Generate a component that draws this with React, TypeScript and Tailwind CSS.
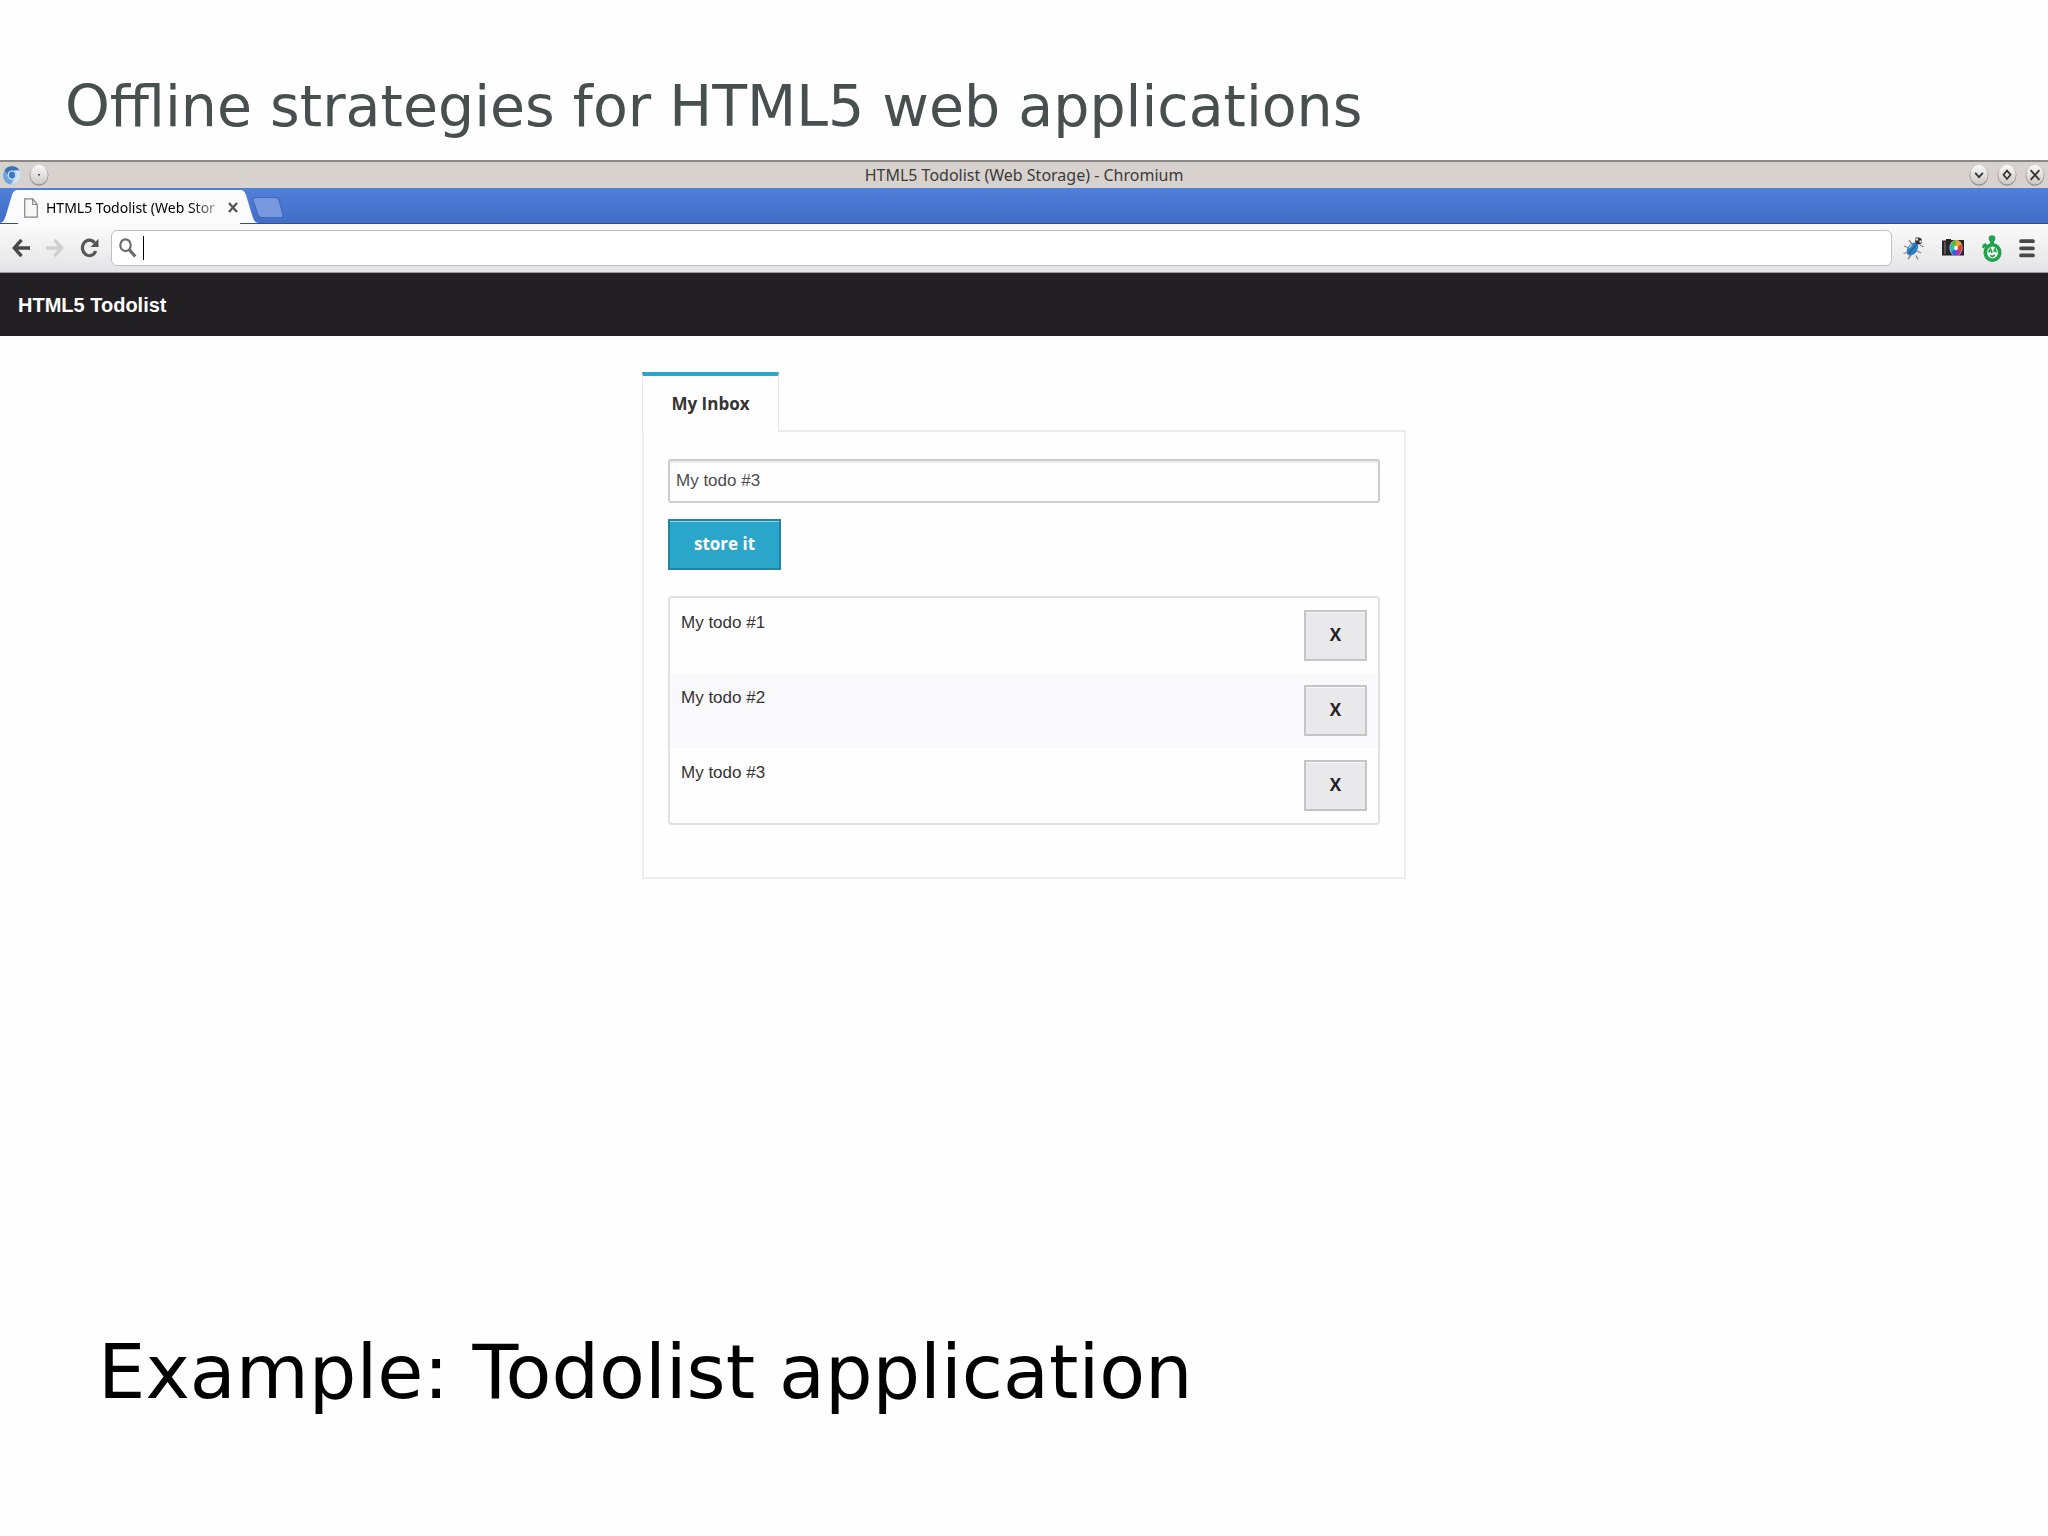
import { useState } from "react";

interface Todo {
  id: number;
  text: string;
}

const initialTodos: Todo[] = [
  { id: 1, text: "My todo #1" },
  { id: 2, text: "My todo #2" },
  { id: 3, text: "My todo #3" },
];

const ChromiumLogo = () => (
  <svg width="18" height="20" viewBox="0 0 18 20" aria-hidden="true">
    <ellipse cx="9" cy="10" rx="8.5" ry="9.5" fill="#a3c8ea" />
    <path d="M1.5 5.5C4 0.5 13 -0.5 16.5 5.5H9c-3 0-4.500 2-4.500 4.500z" fill="#3f70b0" />
    <path d="M1.500 5.500l4 7.500c1 2 3 2 4.500 1.500L7.500 19.500C0 18-1.500 10 1.500 5.500z" fill="#6ea6dc" />
    <path d="M16.500 5.500H12c2 3 1.500 6 0 8l-3 6c7-.5 10-7.500 7.500-14z" fill="#d3e4f3" />
    <ellipse cx="9" cy="10" rx="4" ry="4.500" fill="#c9def2" />
    <ellipse cx="9" cy="10" rx="3" ry="3.500" fill="#3a78c0" />
  </svg>
);

interface WindowButtonProps {
  label: string;
  d: string;
}

const WindowButton = ({ label, d }: WindowButtonProps) => (
  <button aria-label={label} className="h-[22px] w-5">
    <svg width="20" height="22" viewBox="0 0 18 20">
      <defs>
        <linearGradient id="knob" x1="0" y1="0" x2="0" y2="1">
          <stop offset="0" stopColor="#fafafa" />
          <stop offset="1" stopColor="#cbc7c5" />
        </linearGradient>
      </defs>
      <ellipse cx="9" cy="10.500" rx="8.500" ry="9.300" fill="#8d8987" />
      <ellipse cx="9" cy="9.700" rx="8" ry="9" fill="url(#knob)" />
      <path d={d} fill="none" stroke="#37332f" strokeWidth="1.600" />
    </svg>
  </button>
);

const PageIcon = () => (
  <svg width="14" height="20" viewBox="0 0 14 20" aria-hidden="true">
    <path d="M.7.800h8L13.300 6.500v12.700H.7z" fill="#f7f7f7" stroke="#858585" strokeWidth="1.200" />
    <path d="M8.700.800v5.700h4.600" fill="none" stroke="#858585" strokeWidth="1.200" />
  </svg>
);

const BackIcon = () => (
  <svg width="18" height="20" viewBox="0 0 18 20">
    <path d="M18 10H3M9.500 1.800L2.300 10l7.200 8.200" fill="none" stroke="currentColor" strokeWidth="3.400" />
  </svg>
);

const ReloadIcon = () => (
  <svg width="19" height="20" viewBox="0 0 19 20">
    <path d="M14.500 4.700A6.900 7.800 0 1 0 15.700 13" fill="none" stroke="#565656" strokeWidth="3.200" />
    <path d="M18.500 .8V9h-8z" fill="#565656" />
  </svg>
);

const SearchIcon = () => (
  <svg width="18" height="20" viewBox="0 0 18 20" aria-hidden="true">
    <ellipse cx="6.500" cy="7.200" rx="5.200" ry="5.900" fill="none" stroke="#6a6a6a" strokeWidth="2.200" />
    <path d="M10 11.500l6.300 7" stroke="#6a6a6a" strokeWidth="3.200" />
  </svg>
);

const BugIcon = () => (
  <svg width="21" height="24" viewBox="0 0 21 24">
    <path d="M1 10l5 2M.5 17.500l5-1.500M5 23l3-4M13 19.500l2 4M14 15l4 2M6 4l3 4M13 1l1 4M17 9l3.500 2" stroke="#8d857c" strokeWidth="1.300" fill="none" />
    <ellipse cx="9.500" cy="13" rx="4.800" ry="7.200" transform="rotate(35 9.500 13)" fill="#2f7fc4" />
    <path d="M5.500 18L13 8.500" stroke="#174f87" strokeWidth="1" />
    <path d="M6 12l3-3.500" stroke="#9bd0f3" strokeWidth="1.500" />
    <ellipse cx="15.500" cy="5" rx="3.400" ry="3.600" fill="#30302e" />
    <circle cx="14" cy="3.500" r="1.200" fill="#ddd" />
    <circle cx="17.500" cy="5.500" r="1.200" fill="#ddd" />
  </svg>
);

const CameraIcon = () => (
  <svg width="24" height="20" viewBox="0 0 24 20">
    <path d="M1 2.500h4V1h5v1h13v15.500H1z" fill="#26262a" />
    <path d="M4 4v12" stroke="#55555a" strokeWidth="2" />
    <ellipse cx="15" cy="10" rx="6.600" ry="8" fill="#b9bbc0" />
    <path d="M15 10V2.500a6 7.500 0 0 1 5.200 3.700z" fill="#f4a020" />
    <path d="M15 10l5.200-3.800a6 7.500 0 0 1 0 7.600z" fill="#e23a2c" />
    <path d="M15 10l5.200 3.800A6 7.500 0 0 1 15 17.500z" fill="#b02bbd" />
    <path d="M15 10v7.500a6 7.500 0 0 1-5.200-3.700z" fill="#2d62dc" />
    <path d="M15 10l-5.200 3.800a6 7.500 0 0 1 0-7.600z" fill="#27b6c4" />
    <path d="M15 10L9.800 6.200A6 7.500 0 0 1 15 2.500z" fill="#57bd37" />
    <ellipse cx="15" cy="10" rx="1.800" ry="2.200" fill="#fff" />
  </svg>
);

const GreenBotIcon = () => (
  <svg width="20" height="27" viewBox="0 0 20 27">
    <circle cx="10" cy="3.500" r="3.300" fill="#1fa44b" />
    <path d="M8 4h4v6H8z" fill="#1fa44b" />
    <path d="M1.500 9l4 4.500M.5 12.500l4-3.500" stroke="#1fa44b" strokeWidth="2.400" fill="none" />
    <ellipse cx="10.500" cy="17.500" rx="7.200" ry="7.700" fill="#fff" stroke="#1fa44b" strokeWidth="3.600" />
    <path d="M6.500 17.500l2-3.500 1.500 4M14.500 17.500l-1.500-3.500-1.500 3M8 20.500l2.500 1 2.500-1.500" fill="none" stroke="#1fa44b" strokeWidth="1.600" />
  </svg>
);

const MenuIcon = () => (
  <svg width="16" height="19" viewBox="0 0 16 19">
    <path d="M2 2.200h12M2 9.300h12M2 16.400h12" stroke="#484848" strokeWidth="3.700" strokeLinecap="round" />
  </svg>
);

const BrowserChrome = () => (
  <div>
    <div className="flex h-7 items-center border-t-2 border-[#8b8886] bg-[#d7d2ce] px-[3px]">
      <div className="flex flex-1 items-center gap-2">
        <ChromiumLogo />
        <WindowButton label="Sticky" d="M9 9v1.500" />
      </div>
      <p className="font-['Noto_Sans'] text-base leading-6 text-[#3b3b3b]">
        HTML5 Todolist (Web Storage) - Chromium
      </p>
      <div className="flex flex-1 items-center justify-end gap-2">
        <WindowButton label="Minimize" d="M5.500 8l3.500 4 3.500-4" />
        <WindowButton label="Maximize" d="M9 6l3.200 3.800L9 13.600 5.800 9.800z" />
        <WindowButton label="Close" d="M5 5.500l8 9M13 5.500l-8 9" />
      </div>
    </div>

    <div className="flex h-9 items-end border-b border-[#2c4f96] bg-linear-to-b from-[#527fd8] to-[#406ec8]">
      <svg width="18" height="33" viewBox="0 0 18 33" aria-hidden="true">
        <path d="M0 33c4-1 4.500-4 6-8L12 5c1.500-4 3-5 6-5v33z" fill="#fbfbfb" />
      </svg>
      <div className="-mb-px flex h-[34px] w-[222px] items-center gap-2 bg-[#fbfbfb] pl-[6px] pt-px">
        <PageIcon />
        <span className="w-[174px] whitespace-nowrap bg-linear-to-r from-black from-80% to-[#c8c8c8] bg-clip-text font-['Noto_Sans'] text-sm leading-6 text-transparent">
          HTML5 Todolist (Web Stor
        </span>
        <button aria-label="Close tab" className="w-[10px] shrink-0">
          <svg width="10" height="11" viewBox="0 0 10 11">
            <path d="M1 1l8 9M9 1l-8 9" stroke="#555" strokeWidth="2.300" />
          </svg>
        </button>
      </div>
      <svg width="18" height="33" viewBox="0 0 18 33" aria-hidden="true">
        <path d="M18 33c-4-1-4.500-4-6-8L6 5C4.500 1 3 0 0 0v33z" fill="#fbfbfb" />
      </svg>
      <button aria-label="New tab" className="-ml-[6px] mb-[5px]">
        <svg width="32" height="21" viewBox="0 0 30 20">
          <path d="M3 .5h19c2 0 3 1 3.500 2.500L29 16c.5 2 0 3.500-2 3.500H9c-2 0-3-1-3.500-2.500L.8 3C.5 1.500 1 .5 3 .5z" fill="#7798de" stroke="#4067b5" />
        </svg>
      </button>
    </div>

    <div className="flex h-[49px] items-center border-b border-[#9d9d9d] bg-linear-to-b from-[#fbfbfb] to-[#e4e4e6] pl-3 pr-[13px]">
      <div className="flex gap-4 pr-3">
        <button aria-label="Back" className="text-[#484848]">
          <BackIcon />
        </button>
        <button aria-label="Forward" className="rotate-180 text-[#cfcfcf]">
          <BackIcon />
        </button>
        <button aria-label="Reload">
          <ReloadIcon />
        </button>
      </div>
      <label className="flex h-9 flex-1 items-center gap-[6px] rounded-md border border-[#bfbfc3] bg-white pl-[7px]">
        <SearchIcon />
        <span className="h-6 w-px bg-black" />
        <input type="text" aria-label="Address" className="h-8 flex-1 outline-none" />
      </label>
      <div className="flex items-center gap-[17px] pl-[11px]">
        <button aria-label="Debugger">
          <BugIcon />
        </button>
        <button aria-label="Screen capture">
          <CameraIcon />
        </button>
        <button aria-label="Extension">
          <GreenBotIcon />
        </button>
        <button aria-label="Menu">
          <MenuIcon />
        </button>
      </div>
    </div>
  </div>
);

const TodoApp = () => {
  const [value, setValue] = useState<string>("My todo #3");
  const [todos, setTodos] = useState<Todo[]>(initialTodos);

  const addTodo = () => setTodos([...todos, { id: Date.now(), text: value }]);
  const removeTodo = (id: number) => setTodos(todos.filter((todo) => todo.id !== id));

  return (
    <div className="font-['Liberation_Sans',sans-serif] text-[17px]">
      <header className="flex h-[63px] items-center bg-[#232024] px-[18px]">
        <h2 className="text-xl font-bold text-white">HTML5 Todolist</h2>
      </header>

      <main className="mx-auto mt-9 w-[764px]">
        <div className="flex">
          <button className="h-[60px] w-[137px] border-x border-t-4 border-x-[#e8e8ea] border-t-[#2ba6cb] font-['Open_Sans'] font-bold text-[#333]">
            My Inbox
          </button>
          <div className="flex-1 border-b-2 border-[#ebebed]" />
        </div>
        <div className="border-x-2 border-b-2 border-[#ededef] px-6 pb-[52px] pt-[27px]">
          <input
            type="text"
            aria-label="New todo"
            value={value}
            onChange={(e) => setValue(e.target.value)}
            className="block h-11 w-full rounded-[3px] border-2 border-[#cccbce] px-[6px] text-[#4d4d4d] shadow-[inset_0_2px_2px_rgba(0,0,0,0.08)] outline-none"
          />
          <button
            onClick={addTodo}
            className="mt-4 block h-[51px] w-[113px] border-2 border-[#2284a1] bg-[#2ba6cb] pb-[2px] font-['Open_Sans'] font-bold text-white shadow-[inset_0_1px_0_rgba(255,255,255,0.5)]"
          >
            store it
          </button>
          <ul className="mt-[26px] overflow-hidden rounded-[4px] border-2 border-[#e1e0e3] text-[#333]">
            {todos.map((todo) => (
              <li
                key={todo.id}
                className="flex items-start justify-between px-[11px] py-3 even:bg-[#f9f8fb]"
              >
                <span className="leading-[26px]">{todo.text}</span>
                <button
                  aria-label={`Remove ${todo.text}`}
                  onClick={() => removeTodo(todo.id)}
                  className="h-[51px] w-[63px] border-2 border-[#c5c4c7] bg-[#e9e8eb] pb-[2px] font-['Open_Sans'] font-bold text-[#222] shadow-[inset_0_1px_0_rgba(255,255,255,0.6)]"
                >
                  X
                </button>
              </li>
            ))}
          </ul>
        </div>
      </main>
    </div>
  );
};

export default function App() {
  return (
    <div className="min-h-screen bg-[#fefefe] font-['DejaVu_Sans',sans-serif]">
      <h1 className="px-[65px] pb-[22px] pt-[74px] text-[57px] leading-[64px] text-[#484f4f]">
        Offline strategies for HTML5 web applications
      </h1>
      <BrowserChrome />
      <TodoApp />
      <p className="px-[98px] pt-[448px] text-[75px] leading-[90px] text-black">
        Example: Todolist application
      </p>
    </div>
  );
}
